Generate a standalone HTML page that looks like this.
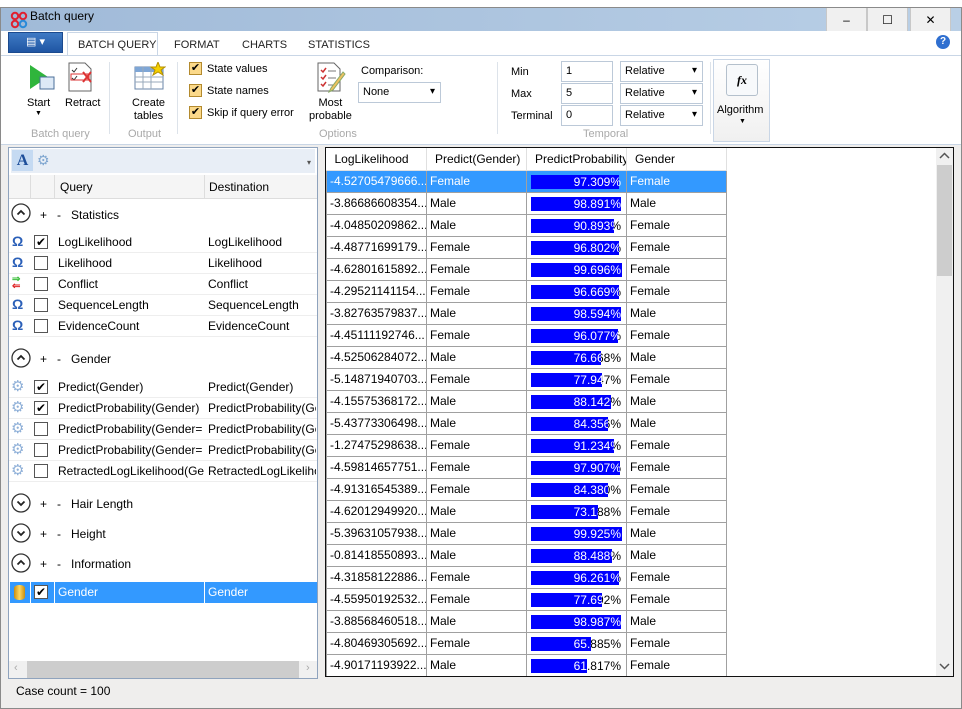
<!DOCTYPE html>
<html><head><meta charset="utf-8">
<style>
*{box-sizing:border-box;margin:0;padding:0}
body{width:962px;height:709px;overflow:hidden;background:#fff;font-family:"Liberation Sans",sans-serif;font-size:12px;color:#000;position:relative}
.a{position:absolute}
.win{left:0;top:7px;width:962px;height:702px;border:1px solid #8a8a8a;background:#efeeed}
.title{left:1px;top:8px;width:960px;height:23px;background:linear-gradient(90deg,#a0bad8,#b9cfe6)}
.wb{top:8px;height:24px;width:41px;background:#f0f0f0;border:1px solid #c8c8c8;border-top:none;text-align:center;font-size:12px;line-height:24px}
.tabrow{left:1px;top:31px;width:960px;height:24px;background:#fff}
.ribbon{left:1px;top:55px;width:960px;height:90px;background:#fff;border-top:1px solid #c9d6e6;border-bottom:1px solid #c9d6e6}
.tab{top:39px;font-size:11px;color:#222}
.gl{color:#a9a9a9;font-size:11px;top:128px}
.sep{width:1px;background:#dde3ea;top:62px;height:72px}
.cb{width:13px;height:13px;border:1px solid #b38a2e;background:#fbd98a;font-size:11px;line-height:11px;text-align:center}
.cb2{width:14px;height:14px;border:1px solid #555;background:#fff;font-size:12px;line-height:12px;text-align:center}
.inp{height:21px;border:1px solid #bcc9d8;background:#fff;padding:3px 4px;font-size:11px}
.dd:after{content:"▾";position:absolute;right:5px;top:3px;font-size:10px}
.lp{left:8px;top:147px;width:310px;height:532px;border:1px solid #8fa3bd;background:#fff}
.gi{width:20px;height:20px}
.row{left:0;width:308px;height:21px;border-bottom:1px solid #eee}
.row span{position:absolute;top:3px}
.grid{left:325px;top:147px;width:629px;height:530px;border:1px solid #111;background:#fff;overflow:hidden}
table{border-collapse:collapse;position:absolute;left:0;top:0;table-layout:fixed;width:401px}
td{border:1px solid #a0a0a0;height:22px;width:100px;padding:0 3px;font-size:12px;white-space:nowrap;overflow:hidden;position:relative}
th{font-weight:normal;height:22px;text-align:left;padding:0 8px;border-right:1px solid #e0e0e0;border-bottom:1px solid #e0e0e0;width:100px;white-space:nowrap;overflow:hidden}
.bar{position:absolute;left:4px;top:4px;height:14px;background:#0000ff;overflow:hidden}
.bk{position:absolute;left:4px;top:4px;width:90px;text-align:right;line-height:14px}
.bar i{font-style:normal;position:absolute;left:0;top:0;width:90px;text-align:right;color:#fff;line-height:14px}
tr.sel td{background:#3399ff;color:#fff}
</style></head><body>
<div class="a win"></div>
<div class="a title"></div>
<div class="a" style="left:10px;top:11px;width:18px;height:18px">
<svg width="18" height="18"><circle cx="5" cy="5" r="3.2" fill="none" stroke="#e02030" stroke-width="2"/><circle cx="13" cy="5" r="3.2" fill="none" stroke="#e02030" stroke-width="2"/><circle cx="5" cy="13" r="3.2" fill="none" stroke="#e02030" stroke-width="2"/><circle cx="13" cy="13" r="3.2" fill="none" stroke="#2a8ad8" stroke-width="2"/></svg></div>
<div class="a" style="left:30px;top:9px;font-size:12px">Batch query</div>
<div class="a wb" style="left:826px">‒</div>
<div class="a wb" style="left:867px">☐</div>
<div class="a wb" style="left:910px">✕</div>
<div class="a tabrow"></div>
<div class="a" style="left:8px;top:32px;width:55px;height:21px;background:linear-gradient(#3f7ac4,#1f55a3);border:1px solid #1b4a8e;color:#fff;text-align:center;font-size:11px;line-height:19px">▤ ▾</div>
<div class="a" style="left:67px;top:32px;width:91px;height:24px;background:#fff;border:1px solid #c9d6e6;border-bottom:none"></div>
<div class="a tab" style="left:78px">BATCH QUERY</div>
<div class="a tab" style="left:174px">FORMAT</div>
<div class="a tab" style="left:242px">CHARTS</div>
<div class="a tab" style="left:308px">STATISTICS</div>
<div class="a" style="left:936px;top:35px;width:14px;height:14px;border-radius:50%;background:#2f6fd0;color:#fff;font-size:10px;font-weight:bold;text-align:center;line-height:14px">?</div>
<div class="a ribbon"></div>
<svg class="a" style="left:28px;top:63px" width="28" height="30"><polygon points="2,2 20,14 2,26" fill="#2fb53c"/><rect x="12" y="14" width="14" height="12" fill="#dde9f6" stroke="#4b6f99"/></svg>
<div class="a" style="left:27px;top:97px;font-size:11px">Start</div>
<div class="a" style="left:35px;top:110px;font-size:7px">▼</div>
<svg class="a" style="left:66px;top:62px" width="28" height="30"><path d="M3 1h16l6 6v22H3z" fill="#fff" stroke="#666"/><path d="M6 8l2 2 3-4M6 16l2 2 3-4" stroke="#333" fill="none"/><rect x="5" y="12" width="18" height="6" fill="none" stroke="#d33"/><path d="M17 10l8 10M25 10l-8 10" stroke="#d33" stroke-width="2"/></svg>
<div class="a" style="left:65px;top:97px;font-size:11px">Retract</div>
<div class="a gl" style="left:31px">Batch query</div>
<div class="a sep" style="left:109px"></div>
<svg class="a" style="left:134px;top:62px" width="32" height="28"><rect x="1" y="5" width="28" height="22" fill="#fff" stroke="#6a85a8"/><rect x="1" y="5" width="28" height="5" fill="#7ea6d6"/><path d="M1 15h28M1 20h28M9 5v22M17 5v22" stroke="#9ab"/><polygon points="24,0 26,5 31,5 27,8 29,13 24,10 19,13 21,8 17,5 22,5" fill="#f5d000" stroke="#b59000"/></svg>
<div class="a" style="left:132px;top:97px;font-size:11px;text-align:center;line-height:13px">Create<br>tables</div>
<div class="a gl" style="left:128px">Output</div>
<div class="a sep" style="left:177px"></div>
<div class="a cb" style="left:189px;top:62px">✔</div><div class="a" style="left:207px;top:63px;font-size:11px">State values</div>
<div class="a cb" style="left:189px;top:84px">✔</div><div class="a" style="left:207px;top:85px;font-size:11px">State names</div>
<div class="a cb" style="left:189px;top:106px">✔</div><div class="a" style="left:207px;top:107px;font-size:11px">Skip if query error</div>
<svg class="a" style="left:316px;top:62px" width="30" height="32"><path d="M2 1h16l6 6v22H2z" fill="#fff" stroke="#666"/><path d="M5 8l2 2 3-4M5 15l2 2 3-4M5 22l2 2 3-4" stroke="#c33" fill="none" stroke-width="1.5"/><path d="M12 9h8M12 16h8M12 23h6" stroke="#777"/><path d="M27 10l-12 16-2 4 4-2 12-16z" fill="#f0c060" stroke="#8a6"/></svg>
<div class="a" style="left:309px;top:97px;font-size:11px;text-align:center;line-height:13px">Most<br>probable</div>
<div class="a" style="left:361px;top:65px;font-size:11px">Comparison:</div>
<div class="a inp dd" style="left:358px;top:82px;width:83px">None</div>
<div class="a gl" style="left:319px">Options</div>
<div class="a sep" style="left:497px"></div>
<div class="a" style="left:511px;top:66px;font-size:11px">Min</div>
<div class="a" style="left:511px;top:88px;font-size:11px">Max</div>
<div class="a" style="left:511px;top:110px;font-size:11px">Terminal</div>
<div class="a inp" style="left:561px;top:61px;width:52px">1</div>
<div class="a inp" style="left:561px;top:83px;width:52px">5</div>
<div class="a inp" style="left:561px;top:105px;width:52px">0</div>
<div class="a inp dd" style="left:620px;top:61px;width:83px">Relative</div>
<div class="a inp dd" style="left:620px;top:83px;width:83px">Relative</div>
<div class="a inp dd" style="left:620px;top:105px;width:83px">Relative</div>
<div class="a gl" style="left:583px">Temporal</div>
<div class="a sep" style="left:710px"></div>
<div class="a" style="left:713px;top:59px;width:57px;height:83px;border:1px solid #c9d6e6;background:linear-gradient(#fff,#f0f0f0)"></div>
<div class="a" style="left:726px;top:64px;width:32px;height:32px;border:1px solid #b4c0cc;border-radius:3px;background:#f7f9fb;text-align:center;font-family:'Liberation Serif',serif;font-style:italic;font-weight:bold;font-size:12px;line-height:30px">fx</div>
<div class="a" style="left:717px;top:104px;font-size:11px">Algorithm</div>
<div class="a" style="left:739px;top:118px;font-size:7px">▼</div>

<div class="a lp">
 <div class="a" style="left:2px;top:1px;width:304px;height:24px;background:#e8eef6"></div>
 <div class="a" style="left:3px;top:2px;width:21px;height:21px;background:#c5daf2;font-family:'Liberation Serif',serif;font-weight:bold;font-size:16px;color:#1d4e9a;text-align:center;line-height:21px">A</div>
 <div class="a" style="left:28px;top:4px;color:#7fa6d0;font-size:14px">⚙</div>
 <div class="a" style="left:298px;top:10px;font-size:8px;color:#555">▾</div>
 <div class="a" style="left:0;top:27px;width:308px;height:24px;background:#f5f5f5;border-bottom:1px solid #ddd"></div>
 <div class="a" style="left:21px;top:27px;width:1px;height:24px;background:#ddd"></div>
 <div class="a" style="left:45px;top:27px;width:1px;height:24px;background:#ddd"></div>
 <div class="a" style="left:195px;top:27px;width:1px;height:24px;background:#ddd"></div>
 <div class="a" style="left:51px;top:32px">Query</div>
 <div class="a" style="left:200px;top:32px">Destination</div>

 <svg class="a gi" style="left:2px;top:55px" viewBox="0 0 20 20"><circle cx="10" cy="10" r="9" fill="none" stroke="#333" stroke-width="1.3"/><path d="M6.5 11.5L10 8l3.5 3.5" fill="none" stroke="#222" stroke-width="1.8"/></svg><div class="a" style="left:31px;top:60px">+&nbsp;&nbsp;&nbsp;-&nbsp;&nbsp;&nbsp;Statistics</div>
 <div class="a row" style="top:84px"><span style="left:3px;color:#2a5fb8;font-weight:bold;font-size:14px;top:1px">Ω</span><span class="cb2" style="left:25px;top:3px">✔</span><span style="left:49px">LogLikelihood</span><span style="left:199px">LogLikelihood</span></div>
 <div class="a row" style="top:105px"><span style="left:3px;color:#2a5fb8;font-weight:bold;font-size:14px;top:1px">Ω</span><span class="cb2" style="left:25px;top:3px"></span><span style="left:49px">Likelihood</span><span style="left:199px">Likelihood</span></div>
 <div class="a row" style="top:126px"><span style="left:3px;font-size:10px;line-height:7px;top:2px"><b style="color:#3b3">⇒</b><br><b style="color:#d22">⇐</b></span><span class="cb2" style="left:25px;top:3px"></span><span style="left:49px">Conflict</span><span style="left:199px">Conflict</span></div>
 <div class="a row" style="top:147px"><span style="left:3px;color:#2a5fb8;font-weight:bold;font-size:14px;top:1px">Ω</span><span class="cb2" style="left:25px;top:3px"></span><span style="left:49px">SequenceLength</span><span style="left:199px">SequenceLength</span></div>
 <div class="a row" style="top:168px"><span style="left:3px;color:#2a5fb8;font-weight:bold;font-size:14px;top:1px">Ω</span><span class="cb2" style="left:25px;top:3px"></span><span style="left:49px">EvidenceCount</span><span style="left:199px">EvidenceCount</span></div>

 <svg class="a gi" style="left:2px;top:200px" viewBox="0 0 20 20"><circle cx="10" cy="10" r="9" fill="none" stroke="#333" stroke-width="1.3"/><path d="M6.5 11.5L10 8l3.5 3.5" fill="none" stroke="#222" stroke-width="1.8"/></svg><div class="a" style="left:31px;top:204px">+&nbsp;&nbsp;&nbsp;-&nbsp;&nbsp;&nbsp;Gender</div>
 <div class="a row" style="top:229px"><span style="left:2px;color:#8fb0d8;font-size:15px;top:0">⚙</span><span class="cb2" style="left:25px;top:3px">✔</span><span style="left:49px">Predict(Gender)</span><span style="left:199px">Predict(Gender)</span></div>
 <div class="a row" style="top:250px"><span style="left:2px;color:#8fb0d8;font-size:15px;top:0">⚙</span><span class="cb2" style="left:25px;top:3px">✔</span><span style="left:49px">PredictProbability(Gender)</span><span style="left:199px;width:108px;overflow:hidden;white-space:nowrap">PredictProbability(Gender)</span></div>
 <div class="a row" style="top:271px"><span style="left:2px;color:#8fb0d8;font-size:15px;top:0">⚙</span><span class="cb2" style="left:25px;top:3px"></span><span style="left:49px;width:148px;overflow:hidden;white-space:nowrap">PredictProbability(Gender=</span><span style="left:199px;width:108px;overflow:hidden;white-space:nowrap">PredictProbability(Gender)</span></div>
 <div class="a row" style="top:292px"><span style="left:2px;color:#8fb0d8;font-size:15px;top:0">⚙</span><span class="cb2" style="left:25px;top:3px"></span><span style="left:49px;width:148px;overflow:hidden;white-space:nowrap">PredictProbability(Gender=</span><span style="left:199px;width:108px;overflow:hidden;white-space:nowrap">PredictProbability(Gender)</span></div>
 <div class="a row" style="top:313px"><span style="left:2px;color:#8fb0d8;font-size:15px;top:0">⚙</span><span class="cb2" style="left:25px;top:3px"></span><span style="left:49px;width:146px;overflow:hidden;white-space:nowrap">RetractedLogLikelihood(Gender)</span><span style="left:199px;width:108px;overflow:hidden;white-space:nowrap">RetractedLogLikelihood</span></div>

 <svg class="a gi" style="left:2px;top:345px" viewBox="0 0 20 20"><circle cx="10" cy="10" r="9" fill="none" stroke="#333" stroke-width="1.3"/><path d="M6.5 8.5L10 12l3.5-3.5" fill="none" stroke="#222" stroke-width="1.8"/></svg><div class="a" style="left:31px;top:349px">+&nbsp;&nbsp;&nbsp;-&nbsp;&nbsp;&nbsp;Hair Length</div>
 <svg class="a gi" style="left:2px;top:375px" viewBox="0 0 20 20"><circle cx="10" cy="10" r="9" fill="none" stroke="#333" stroke-width="1.3"/><path d="M6.5 8.5L10 12l3.5-3.5" fill="none" stroke="#222" stroke-width="1.8"/></svg><div class="a" style="left:31px;top:379px">+&nbsp;&nbsp;&nbsp;-&nbsp;&nbsp;&nbsp;Height</div>
 <svg class="a gi" style="left:2px;top:405px" viewBox="0 0 20 20"><circle cx="10" cy="10" r="9" fill="none" stroke="#333" stroke-width="1.3"/><path d="M6.5 11.5L10 8l3.5 3.5" fill="none" stroke="#222" stroke-width="1.8"/></svg><div class="a" style="left:31px;top:409px">+&nbsp;&nbsp;&nbsp;-&nbsp;&nbsp;&nbsp;Information</div>
 <div class="a" style="left:1px;top:434px;width:307px;height:21px;background:#3399ff"></div>
 <div class="a" style="left:21px;top:434px;width:1px;height:21px;background:#fff"></div>
 <div class="a" style="left:45px;top:434px;width:1px;height:21px;background:#fff"></div>
 <div class="a" style="left:195px;top:434px;width:1px;height:21px;background:#fff"></div>
 <div class="a" style="left:5px;top:437px;width:11px;height:15px;background:linear-gradient(90deg,#c98e10,#ffd760,#c98e10);border-radius:5px/3px"></div>
 <div class="a cb2" style="left:25px;top:437px">✔</div>
 <div class="a" style="left:49px;top:437px;color:#fff">Gender</div>
 <div class="a" style="left:199px;top:437px;color:#fff">Gender</div>

 <div class="a" style="left:0;top:513px;width:308px;height:17px;background:#f0f0f0"></div>
 <div class="a" style="left:18px;top:513px;width:272px;height:17px;background:#cdcdcd"></div>
 <div class="a" style="left:5px;top:514px;color:#aaa;font-size:11px">‹</div>
 <div class="a" style="left:297px;top:514px;color:#aaa;font-size:11px">›</div>
</div>
<div class="a" style="left:16px;top:684px">Case count = 100</div>

<div class="a grid">
<table>
<colgroup><col style="width:100px"><col style="width:100px"><col style="width:100px"><col style="width:100px"></colgroup>
<tr><th>LogLikelihood</th><th>Predict(Gender)</th><th>PredictProbability(Gender)</th><th>Gender</th></tr>
<tr class="sel"><td>-4.52705479666...</td><td>Female</td><td><span class="bk">97.309%</span><div class="bar" style="width:88px"><i>97.309%</i></div></td><td>Female</td></tr>
<tr><td>-3.86686608354...</td><td>Male</td><td><span class="bk">98.891%</span><div class="bar" style="width:90px"><i>98.891%</i></div></td><td>Male</td></tr>
<tr><td>-4.04850209862...</td><td>Male</td><td><span class="bk">90.893%</span><div class="bar" style="width:83px"><i>90.893%</i></div></td><td>Female</td></tr>
<tr><td>-4.48771699179...</td><td>Female</td><td><span class="bk">96.802%</span><div class="bar" style="width:88px"><i>96.802%</i></div></td><td>Female</td></tr>
<tr><td>-4.62801615892...</td><td>Female</td><td><span class="bk">99.696%</span><div class="bar" style="width:91px"><i>99.696%</i></div></td><td>Female</td></tr>
<tr><td>-4.29521141154...</td><td>Female</td><td><span class="bk">96.669%</span><div class="bar" style="width:88px"><i>96.669%</i></div></td><td>Female</td></tr>
<tr><td>-3.82763579837...</td><td>Male</td><td><span class="bk">98.594%</span><div class="bar" style="width:90px"><i>98.594%</i></div></td><td>Male</td></tr>
<tr><td>-4.45111192746...</td><td>Female</td><td><span class="bk">96.077%</span><div class="bar" style="width:87px"><i>96.077%</i></div></td><td>Female</td></tr>
<tr><td>-4.52506284072...</td><td>Male</td><td><span class="bk">76.668%</span><div class="bar" style="width:70px"><i>76.668%</i></div></td><td>Male</td></tr>
<tr><td>-5.14871940703...</td><td>Female</td><td><span class="bk">77.947%</span><div class="bar" style="width:71px"><i>77.947%</i></div></td><td>Female</td></tr>
<tr><td>-4.15575368172...</td><td>Male</td><td><span class="bk">88.142%</span><div class="bar" style="width:80px"><i>88.142%</i></div></td><td>Male</td></tr>
<tr><td>-5.43773306498...</td><td>Male</td><td><span class="bk">84.356%</span><div class="bar" style="width:77px"><i>84.356%</i></div></td><td>Male</td></tr>
<tr><td>-1.27475298638...</td><td>Female</td><td><span class="bk">91.234%</span><div class="bar" style="width:83px"><i>91.234%</i></div></td><td>Female</td></tr>
<tr><td>-4.59814657751...</td><td>Female</td><td><span class="bk">97.907%</span><div class="bar" style="width:89px"><i>97.907%</i></div></td><td>Female</td></tr>
<tr><td>-4.91316545389...</td><td>Female</td><td><span class="bk">84.380%</span><div class="bar" style="width:77px"><i>84.380%</i></div></td><td>Female</td></tr>
<tr><td>-4.62012949920...</td><td>Male</td><td><span class="bk">73.188%</span><div class="bar" style="width:67px"><i>73.188%</i></div></td><td>Female</td></tr>
<tr><td>-5.39631057938...</td><td>Male</td><td><span class="bk">99.925%</span><div class="bar" style="width:91px"><i>99.925%</i></div></td><td>Male</td></tr>
<tr><td>-0.81418550893...</td><td>Male</td><td><span class="bk">88.488%</span><div class="bar" style="width:81px"><i>88.488%</i></div></td><td>Male</td></tr>
<tr><td>-4.31858122886...</td><td>Female</td><td><span class="bk">96.261%</span><div class="bar" style="width:88px"><i>96.261%</i></div></td><td>Female</td></tr>
<tr><td>-4.55950192532...</td><td>Female</td><td><span class="bk">77.692%</span><div class="bar" style="width:71px"><i>77.692%</i></div></td><td>Female</td></tr>
<tr><td>-3.88568460518...</td><td>Male</td><td><span class="bk">98.987%</span><div class="bar" style="width:90px"><i>98.987%</i></div></td><td>Male</td></tr>
<tr><td>-4.80469305692...</td><td>Female</td><td><span class="bk">65.885%</span><div class="bar" style="width:60px"><i>65.885%</i></div></td><td>Female</td></tr>
<tr><td>-4.90171193922...</td><td>Male</td><td><span class="bk">61.817%</span><div class="bar" style="width:56px"><i>61.817%</i></div></td><td>Female</td></tr>
</table>
<div class="a" style="left:610px;top:0;width:17px;height:528px;background:#f0f0f0"></div>
<div class="a" style="left:611px;top:17px;width:15px;height:111px;background:#cdcdcd"></div>
<svg class="a" style="left:613px;top:4px" width="11" height="8"><path d="M1 6l4.5-4.5L10 6" fill="none" stroke="#555" stroke-width="1.5"/></svg>
<svg class="a" style="left:613px;top:514px" width="11" height="8"><path d="M1 2l4.5 4.5L10 2" fill="none" stroke="#555" stroke-width="1.5"/></svg>
</div>
</body></html>
